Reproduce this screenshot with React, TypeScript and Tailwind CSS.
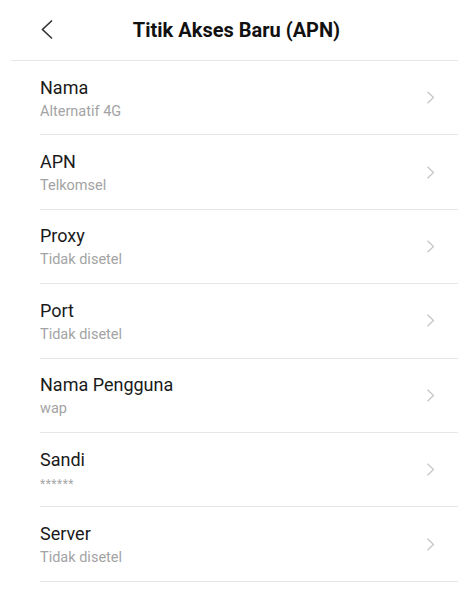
const rows = [
  { title: "Nama", value: "Alternatif 4G" },
  { title: "APN", value: "Telkomsel" },
  { title: "Proxy", value: "Tidak disetel" },
  { title: "Port", value: "Tidak disetel" },
  { title: "Nama Pengguna", value: "wap" },
  { title: "Sandi", value: "******", masked: true },
  { title: "Server", value: "Tidak disetel" },
];

function Chevron({ left }: { left?: boolean }) {
  if (left) {
    return (
      <svg width="14" height="21" viewBox="0 0 14 21" fill="none">
        <path d="M12 1.5 L2.5 10.5 L12 19.5" stroke="#333" strokeWidth="1.6" />
      </svg>
    );
  }
  return (
    <svg width="9" height="13" viewBox="0 0 9 13" fill="none">
      <path d="M1.5 0.8 L7.5 6.5 L1.5 12.2" stroke="#c4c4c4" strokeWidth="1.2" />
    </svg>
  );
}

export default function App() {
  return (
    <div className="w-[473px] h-[593px] bg-white font-['Roboto',sans-serif] overflow-hidden">
      <div className="h-[60px] flex items-center relative">
        <div className="pl-[40px] pb-[1px]">
          <Chevron left />
        </div>
        <h1 className="absolute left-0 right-0 text-center text-[20px] leading-[24px] font-bold text-[#111]">
          Titik Akses Baru (APN)
        </h1>
      </div>
      <div className="ml-[11px] mr-[15px] h-px bg-[#e6e6e6]" />
      <div className="ml-[40px] mr-[15px]">
        {rows.map((r) => (
          <div
            key={r.title}
            className="h-[74.4px] border-b border-[#e6e6e6] flex items-center justify-between"
          >
            <div className="flex flex-col pt-[2px]">
              <span className="text-[18px] leading-[22px] text-[#1a1a1a]">
                {r.title}
              </span>
              <span
                className={
                  r.masked
                    ? "mt-[4px] text-[12px] leading-[18px] text-[#a8a8a8] tracking-[0.5px]"
                    : "mt-[4px] text-[14.5px] leading-[18px] text-[#a3a3a3]"
                }
              >
                {r.value}
              </span>
            </div>
            <div className="mr-[23px] flex items-center">
              <Chevron />
            </div>
          </div>
        ))}
      </div>
    </div>
  );
}
